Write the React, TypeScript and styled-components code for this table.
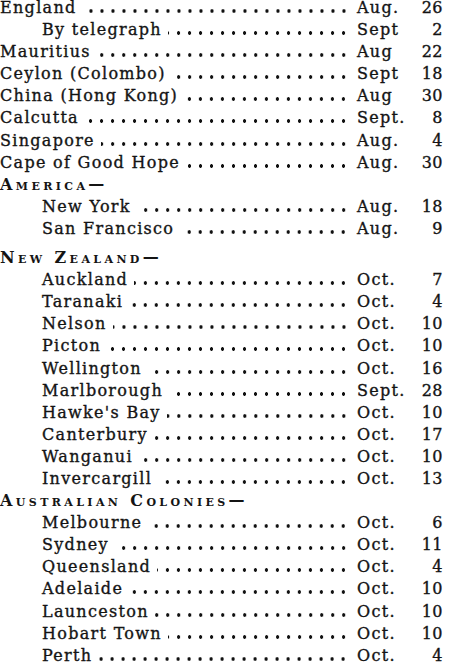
import React from 'react'
import styled, { createGlobalStyle } from 'styled-components';

type Entry = { name: string; month: string; day: string; indent?: boolean };
type Section = { title?: React.ReactNode; gap?: number; entries: Entry[] };

const sections: Section[] = [
    {
        entries: [
            { name: 'England', month: 'Aug.', day: '26' },
            { name: 'By telegraph', month: 'Sept', day: '2', indent: true },
            { name: 'Mauritius', month: 'Aug', day: '22' },
            { name: 'Ceylon (Colombo)', month: 'Sept', day: '18' },
            { name: 'China (Hong Kong)', month: 'Aug', day: '30' },
            { name: 'Calcutta', month: 'Sept.', day: '8' },
            { name: 'Singapore', month: 'Aug.', day: '4' },
            { name: 'Cape of Good Hope', month: 'Aug.', day: '30' },
        ],
    },
    {
        title: 'America—',
        entries: [
            { name: 'New York', month: 'Aug.', day: '18', indent: true },
            { name: 'San Francisco', month: 'Aug.', day: '9', indent: true },
        ],
    },
    {
        title: 'New Zealand—',
        gap: 7,
        entries: [
            { name: 'Auckland', month: 'Oct.', day: '7', indent: true },
            { name: 'Taranaki', month: 'Oct.', day: '4', indent: true },
            { name: 'Nelson', month: 'Oct.', day: '10', indent: true },
            { name: 'Picton', month: 'Oct.', day: '10', indent: true },
            { name: 'Wellington', month: 'Oct.', day: '16', indent: true },
            { name: 'Marlborough', month: 'Sept.', day: '28', indent: true },
            { name: "Hawke's Bay", month: 'Oct.', day: '10', indent: true },
            { name: 'Canterbury', month: 'Oct.', day: '17', indent: true },
            { name: 'Wanganui', month: 'Oct.', day: '10', indent: true },
            { name: 'Invercargill', month: 'Oct.', day: '13', indent: true },
        ],
    },
    {
        title: 'Australian Colonies—',
        entries: [
            { name: 'Melbourne', month: 'Oct.', day: '6', indent: true },
            { name: 'Sydney', month: 'Oct.', day: '11', indent: true },
            { name: 'Queensland', month: 'Oct.', day: '4', indent: true },
            { name: 'Adelaide', month: 'Oct.', day: '10', indent: true },
            { name: 'Launceston', month: 'Oct.', day: '10', indent: true },
            { name: 'Hobart Town', month: 'Oct.', day: '10', indent: true },
            { name: 'Perth', month: 'Oct.', day: '4', indent: true },
        ],
    },
];

const App: React.FC<{}> = () => {
    return (
        <>
            <GlobalStyle />
            <Page>
                {sections.map((section, i) => (
                    <Group key={i} $gap={section.gap || 0}>
                        {section.title && <Heading>{section.title}</Heading>}
                        {section.entries.map((entry) => (
                            <Row key={entry.name} $indent={!!entry.indent}>
                                <Name>{entry.name}</Name>
                                <Leader />
                                <DateCell>
                                    <Month>{entry.month}</Month>
                                    <Day>{entry.day}</Day>
                                </DateCell>
                            </Row>
                        ))}
                    </Group>
                ))}
            </Page>
        </>
    )
}

const GlobalStyle = createGlobalStyle`
    body {
        margin: 0;
        background: #ffffff;
        color: #141414;
        font-family: "DejaVu Serif", "Liberation Serif", serif;
    }
`;
const Page = styled.div`
    width: 450px;
    padding: 0 7px 0 0;
    margin-top: -3px;
    box-sizing: border-box;
    display: flex;
    flex-direction: column;
`;
const Group = styled.section<{ $gap: number }>`
    display: flex;
    flex-direction: column;
    margin-top: ${({ $gap }) => $gap}px;
`;
const Heading = styled.div`
    height: 22.1px;
    line-height: 22px;
    font-size: 16px;
    font-weight: bold;
    font-variant: small-caps;
    letter-spacing: 3.4px;
    white-space: nowrap;
`;
const Row = styled.div<{ $indent: boolean }>`
    display: flex;
    align-items: baseline;
    height: 22.1px;
    line-height: 22px;
    font-size: 16px;
    letter-spacing: 1.3px;
    -webkit-text-stroke: 0.35px #141414;
    padding-left: ${({ $indent }) => ($indent ? '42px' : '0px')};
`;
const Name = styled.span`
    white-space: nowrap;
`;
const Leader = styled.span`
    flex: 1;
    height: 4px;
    margin: 0 8px 0 6px;
    background-image: radial-gradient(circle, #111 1.5px, transparent 2px);
    background-size: 11px 4px;
    background-repeat: repeat-x;
    background-position: right bottom;
`;
const DateCell = styled.span`
    width: 86px;
    display: flex;
    align-items: baseline;
    justify-content: space-between;
    white-space: nowrap;
`;
const Month = styled.span``;
const Day = styled.span`
    letter-spacing: 0.5px;
`;

export default App
